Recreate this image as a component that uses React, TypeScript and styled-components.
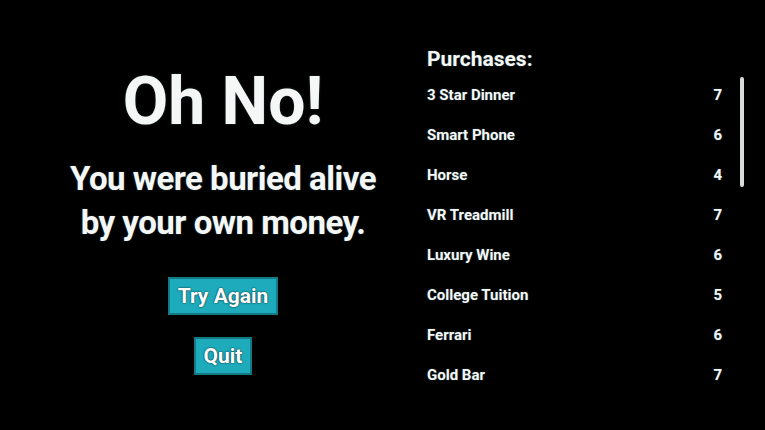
import styled, { createGlobalStyle } from "styled-components";

const GlobalStyle = createGlobalStyle`
  html, body {
    margin: 0;
    padding: 0;
    background: #000;
  }
  body {
    width: 765px;
    height: 430px;
    overflow: hidden;
    font-family: Roboto, "Liberation Sans", sans-serif;
    color: #f5f7f7;
  }
`;

const purchases = [
  { name: "3 Star Dinner", count: 7 },
  { name: "Smart Phone", count: 6 },
  { name: "Horse", count: 4 },
  { name: "VR Treadmill", count: 7 },
  { name: "Luxury Wine", count: 6 },
  { name: "College Tuition", count: 5 },
  { name: "Ferrari", count: 6 },
  { name: "Gold Bar", count: 7 },
];

const Screen = styled.div`
  display: flex;
  width: 765px;
  height: 430px;
  background: #000;
  overflow: hidden;
`;

const GameOverPanel = styled.section`
  display: flex;
  flex-direction: column;
  align-items: center;
  width: 400px;
  margin-left: 23px;
  padding-top: 69px;
`;

const Title = styled.h1`
  margin: 0;
  font-size: 66px;
  line-height: 66px;
  font-weight: 700;
  text-shadow: 0 0 2px rgba(120, 200, 210, 0.35);
`;

const Message = styled.p`
  margin: 22px 0 0;
  font-size: 33px;
  line-height: 44px;
  font-weight: 700;
  letter-spacing: -0.5px;
  text-align: center;
  text-shadow: 0 0 2px rgba(120, 200, 210, 0.35);
`;

const Actions = styled.div`
  display: flex;
  flex-direction: column;
  align-items: center;
  gap: 22px;
  margin-top: 32px;
`;

const MenuButton = styled.button`
  height: 38px;
  padding: 0 8px;
  border: 2px solid #137a86;
  background: #1eacbc;
  color: #fff;
  font-family: Roboto, "Liberation Sans", sans-serif;
  font-size: 21px;
  font-weight: 700;
  text-shadow: 0 0 2px #0b3c44, 0 0 1px #0b3c44;
  cursor: pointer;
`;

const PurchasesPanel = styled.section`
  display: flex;
  flex-direction: column;
  width: 318px;
  margin-left: 4px;
  padding-top: 47px;
`;

const PanelHeading = styled.h2`
  margin: 0 0 3px;
  font-size: 21px;
  line-height: 25px;
  font-weight: 700;
  text-shadow: 0 0 2px rgba(120, 200, 210, 0.35);
`;

const List = styled.ul`
  position: relative;
  margin: 0;
  padding: 0;
  list-style: none;
`;

const Row = styled.li`
  display: flex;
  align-items: center;
  justify-content: space-between;
  width: 295px;
  height: 40px;
  font-size: 15px;
  font-weight: 700;
  text-shadow: 0 0 2px rgba(120, 200, 210, 0.35);
`;

const ScrollThumb = styled.div`
  position: absolute;
  top: 2px;
  left: 313px;
  width: 4px;
  height: 110px;
  border-radius: 2px;
  background: #d9dcdc;
`;

export default function App() {
  return (
    <>
      <GlobalStyle />
      <Screen>
        <GameOverPanel>
          <Title>Oh No!</Title>
          <Message>
            You were buried alive
            <br />
            by your own money.
          </Message>
          <Actions>
            <MenuButton>Try Again</MenuButton>
            <MenuButton>Quit</MenuButton>
          </Actions>
        </GameOverPanel>
        <PurchasesPanel>
          <PanelHeading>Purchases:</PanelHeading>
          <List>
            {purchases.map((p) => (
              <Row key={p.name}>
                <span>{p.name}</span>
                <span>{p.count}</span>
              </Row>
            ))}
            <ScrollThumb />
          </List>
        </PurchasesPanel>
      </Screen>
    </>
  );
}
